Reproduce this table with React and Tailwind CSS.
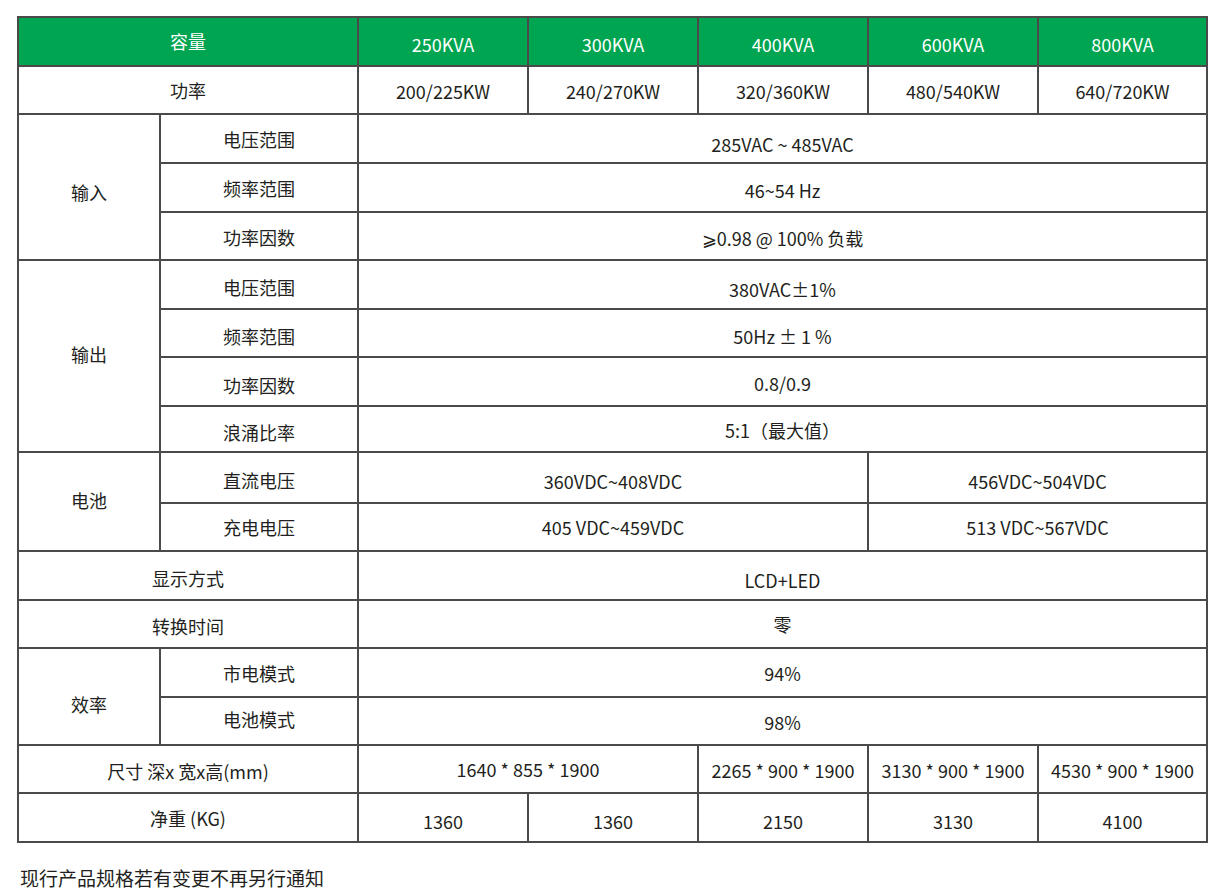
import React from 'react';

const cell = 'border-2 border-[#4a4a4a] text-center align-middle p-0';
const models = ['250KVA', '300KVA', '400KVA', '600KVA', '800KVA'];
const power = ['200/225KW', '240/270KW', '320/360KW', '480/540KW', '640/720KW'];

const C = ({ children, span, rows, off = '' }) => (
  <td colSpan={span} rowSpan={rows} className={cell}>
    <span className={`relative ${off}`}>{children}</span>
  </td>
);

export default function App() {
  return (
    <div
      className="min-h-screen bg-white text-[#231f20] pl-[17px] pt-[16px]"
      style={{ fontFamily: '"Noto Sans CJK SC", "Noto Sans", sans-serif' }}
    >
      <table className="table-fixed border-collapse w-[1189px] text-[18px] leading-none">
        <colgroup>
          <col className="w-[142px]" />
          <col className="w-[198px]" />
          <col className="w-[170px]" />
          <col className="w-[170px]" />
          <col className="w-[170px]" />
          <col className="w-[170px]" />
          <col className="w-[169px]" />
        </colgroup>
        <tbody>
          <tr className="h-[49px] bg-[#00a551] text-white">
            <C span={2} off="-top-[1px]">容量</C>
            {models.map((m) => (
              <C key={m} off="top-[2px]">{m}</C>
            ))}
          </tr>
          <tr className="h-[48px]">
            <C span={2}>功率</C>
            {power.map((p) => (
              <C key={p} off="top-[1px]">{p}</C>
            ))}
          </tr>
          <tr className="h-[49px]">
            <C rows={3} off="top-[5px]">输入</C>
            <C>电压范围</C>
            <C span={5} off="top-[5px]">285VAC ~ 485VAC</C>
          </tr>
          <tr className="h-[49px]">
            <C>频率范围</C>
            <C span={5} off="top-[2px]">46~54 Hz</C>
          </tr>
          <tr className="h-[48px]">
            <C off="top-[1px]">功率因数</C>
            <C span={5} off="top-[2px]">⩾0.98 @ 100% 负载</C>
          </tr>
          <tr className="h-[49px]">
            <C rows={4} off="-top-[2px]">输出</C>
            <C off="top-[2px]">电压范围</C>
            <C span={5} off="top-[4px]">380VAC±1%</C>
          </tr>
          <tr className="h-[48px]">
            <C off="top-[3px]">频率范围</C>
            <C span={5} off="top-[3px]">50Hz ± 1 %</C>
          </tr>
          <tr className="h-[49px]">
            <C off="top-[3px]">功率因数</C>
            <C span={5} off="top-[1px]">0.8/0.9</C>
          </tr>
          <tr className="h-[46px]">
            <C off="top-[3px]">浪涌比率</C>
            <C span={5} off="top-[1px]">5:1（最大值）</C>
          </tr>
          <tr className="h-[51px]">
            <C rows={2} off="-top-[2px]">电池</C>
            <C off="top-[2px]">直流电压</C>
            <C span={3} off="top-[3px]">360VDC~408VDC</C>
            <C span={2} off="top-[3px]">456VDC~504VDC</C>
          </tr>
          <tr className="h-[48px]">
            <C>充电电压</C>
            <C span={3}>405 VDC~459VDC</C>
            <C span={2}>513 VDC~567VDC</C>
          </tr>
          <tr className="h-[49px]">
            <C span={2} off="top-[2px]">显示方式</C>
            <C span={5} off="top-[4px]">LCD+LED</C>
          </tr>
          <tr className="h-[48px]">
            <C span={2} off="top-[2px]">转换时间</C>
            <C span={5}>零</C>
          </tr>
          <tr className="h-[49px]">
            <C rows={2} off="top-[7px]">效率</C>
            <C>市电模式</C>
            <C span={5}>94%</C>
          </tr>
          <tr className="h-[48px]">
            <C off="-top-[2px]">电池模式</C>
            <C span={5} off="top-[1px]">98%</C>
          </tr>
          <tr className="h-[48px]">
            <C span={2} off="top-[2px]">尺寸 深x 宽x高(mm)</C>
            <C span={2}>1640 * 855 * 1900</C>
            <C off="top-[1px]">2265 * 900 * 1900</C>
            <C off="top-[1px]">3130 * 900 * 1900</C>
            <C off="top-[1px]">4530 * 900 * 1900</C>
          </tr>
          <tr className="h-[49px]">
            <C span={2}>净重 (KG)</C>
            <C off="top-[3px]">1360</C>
            <C off="top-[3px]">1360</C>
            <C off="top-[3px]">2150</C>
            <C off="top-[3px]">3130</C>
            <C off="top-[3px]">4100</C>
          </tr>
        </tbody>
      </table>
      <p className="mt-[25px] ml-[3px] text-[19px] leading-none">现行产品规格若有变更不再另行通知</p>
    </div>
  );
}
